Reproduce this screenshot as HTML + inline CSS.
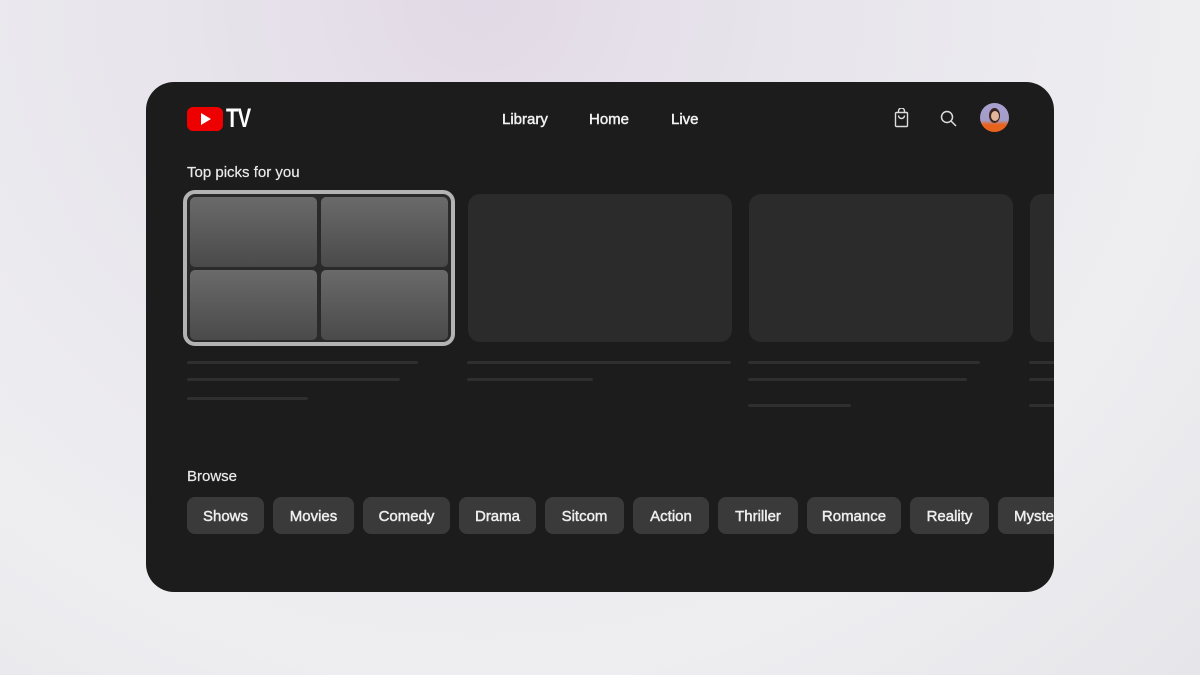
<!DOCTYPE html>
<html><head><style>
*{margin:0;padding:0;box-sizing:border-box}
body{width:1200px;height:675px;overflow:hidden;font-family:"Liberation Sans",sans-serif;
background:radial-gradient(ellipse at 40% 0%,#e2dae6 0%,#e8e6ec 35%,#eeeef1 70%,#e6e6ea 100%);position:relative}
.panel{position:absolute;left:146px;top:82px;width:908px;height:510px;background:#1c1c1c;border-radius:28px;overflow:hidden}
.a{position:absolute}
.nav{position:absolute;top:29px;color:#f1f1f1;font-size:15px;-webkit-text-stroke:.45px #f1f1f1}
.h{position:absolute;color:#eaeaea;font-size:15px;-webkit-text-stroke:.2px #eaeaea}
.card{position:absolute;top:112px;width:264px;height:148px;background:#2b2b2b;border-radius:12px}
.ln{position:absolute;height:3px;background:#2f2f2f;border-radius:2px}
.chip{position:absolute;top:415px;height:37px;background:#3a3a3a;border-radius:8px;color:#eee;font-size:15px;-webkit-text-stroke:.45px #eee;line-height:39px;text-align:center}
.t{position:absolute;width:127px;height:70px;border-radius:5px;background:linear-gradient(#6a6a6a,#4a4a4a)}
</style></head><body>
<div class="panel">
 <div class="a" style="left:41px;top:25px;width:36px;height:24px;background:#e00;border-radius:6px"></div>
 <div class="a" style="left:55px;top:31px;width:0;height:0;border-left:10px solid #fff;border-top:6px solid transparent;border-bottom:6px solid transparent"></div>
 <div class="a" style="left:80px;top:21px;color:#fff;font-size:27px;font-weight:bold;transform:scaleX(.75);transform-origin:left;letter-spacing:-1px">TV</div>
 <div class="nav" style="left:356px">Library</div>
 <div class="nav" style="left:443px">Home</div>
 <div class="nav" style="left:525px">Live</div>
 <svg class="a" style="left:746px;top:26px" width="20" height="20" viewBox="0 0 20 20" fill="none" stroke="#ddd" stroke-width="1.4"><rect x="3.5" y="4.5" width="12" height="14" rx="1"/><path d="M6.5 4.5V3a3 3 0 0 1 6 0v1.5M6.5 7.5a3 3 0 0 0 6 0"/></svg>
 <svg class="a" style="left:793px;top:27px" width="20" height="20" viewBox="0 0 20 20" fill="none" stroke="#ddd" stroke-width="1.5"><circle cx="8" cy="8" r="5.5"/><path d="M12 12l5 5"/></svg>
 <div class="a" style="left:834px;top:21px;width:29px;height:29px;border-radius:50%;background:linear-gradient(#a9a0d0 0%,#a39cc8 60%,#e8641e 75%);overflow:hidden"><div class="a" style="left:9px;top:5px;width:11px;height:15px;border-radius:50%;background:#3a2520"></div><div class="a" style="left:11px;top:8px;width:8px;height:10px;border-radius:50%;background:#e3b59a"></div></div>
 <div class="h" style="left:41px;top:82px">Top picks for you</div>
 <div class="a" style="left:37px;top:108px;width:272px;height:156px;border:4px solid #b3b3b3;border-radius:12px;background:#2a2a2a"></div>
 <div class="t" style="left:44px;top:115px"></div><div class="t" style="left:175px;top:115px"></div>
 <div class="t" style="left:44px;top:188px"></div><div class="t" style="left:175px;top:188px"></div>
 <div class="card" style="left:322px"></div>
 <div class="card" style="left:603px"></div>
 <div class="card" style="left:884px"></div>
 <div class="ln" style="left:41px;top:279px;width:231px"></div>
 <div class="ln" style="left:41px;top:296px;width:213px"></div>
 <div class="ln" style="left:41px;top:315px;width:121px"></div>
 <div class="ln" style="left:321px;top:279px;width:264px"></div>
 <div class="ln" style="left:321px;top:296px;width:126px"></div>
 <div class="ln" style="left:602px;top:279px;width:232px"></div>
 <div class="ln" style="left:602px;top:296px;width:219px"></div>
 <div class="ln" style="left:602px;top:322px;width:103px"></div>
 <div class="ln" style="left:883px;top:279px;width:40px"></div>
 <div class="ln" style="left:883px;top:296px;width:40px"></div>
 <div class="ln" style="left:883px;top:322px;width:40px"></div>
 <div class="h" style="left:41px;top:386px">Browse</div>
 <div class="chip" style="left:41px;width:77px">Shows</div>
 <div class="chip" style="left:127px;width:81px">Movies</div>
 <div class="chip" style="left:217px;width:87px">Comedy</div>
 <div class="chip" style="left:313px;width:77px">Drama</div>
 <div class="chip" style="left:399px;width:79px">Sitcom</div>
 <div class="chip" style="left:487px;width:76px">Action</div>
 <div class="chip" style="left:572px;width:80px">Thriller</div>
 <div class="chip" style="left:661px;width:94px">Romance</div>
 <div class="chip" style="left:764px;width:79px">Reality</div>
 <div class="chip" style="left:852px;width:90px;text-align:left;padding-left:16px">Mystery</div>
</div>
</body></html>
